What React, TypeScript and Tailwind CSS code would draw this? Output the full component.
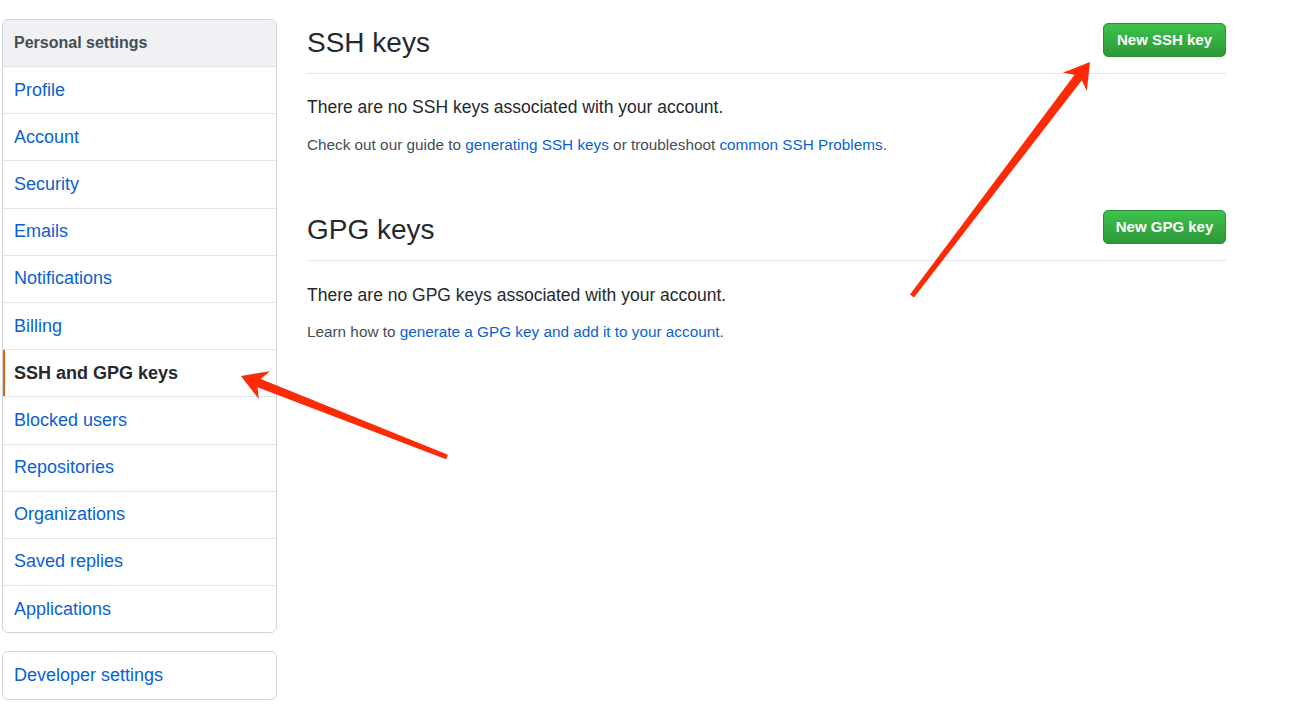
import React from "react";

const menuItems = [
  "Profile",
  "Account",
  "Security",
  "Emails",
  "Notifications",
  "Billing",
  "SSH and GPG keys",
  "Blocked users",
  "Repositories",
  "Organizations",
  "Saved replies",
  "Applications",
];

type Pt = [number, number];

// builds a tapered annotation arrow like the macOS markup tool draws
function arrowPoints(tail: Pt, tip: Pt, headLen = 25, headHalf = 15, tailHalf = 2.5, neckHalf = 4.5) {
  const dx = tip[0] - tail[0];
  const dy = tip[1] - tail[1];
  const len = Math.hypot(dx, dy);
  const ux = dx / len;
  const uy = dy / len;
  const nx = -uy;
  const ny = ux;
  const at = (along: number, side: number): string =>
    `${(tip[0] - ux * along + nx * side).toFixed(1)},${(tip[1] - uy * along + ny * side).toFixed(1)}`;
  const neck = headLen * 0.78;
  return [
    at(len, tailHalf),
    at(neck, neckHalf),
    at(headLen, headHalf),
    at(0, 0),
    at(headLen, -headHalf),
    at(neck, -neckHalf),
    at(len, -tailHalf),
  ].join(" ");
}

function GreenButton({ label }: { label: string }) {
  return (
    <button
      type="button"
      className="h-[34px] w-[123px] rounded-[5px] border border-[#2c8f37] bg-gradient-to-b from-[#3ec24c] to-[#2b9938] text-[15px] font-bold text-white"
    >
      {label}
    </button>
  );
}

function Section({
  title,
  button,
  lead,
  children,
  first,
}: {
  title: string;
  button: string;
  lead: string;
  children: React.ReactNode;
  first?: boolean;
}) {
  return (
    <section className={first ? "" : "mt-[54px]"}>
      <div className="flex items-start justify-between border-b border-[#e1e4e8] pb-[10px]">
        <h2 className="text-[28px] leading-[40px] font-normal text-[#24292e]">{title}</h2>
        <GreenButton label={button} />
      </div>
      <p className={`${first ? "mt-[21px]" : "mt-[22px]"} text-[17.5px] leading-[24px] text-[#24292e]`}>{lead}</p>
      <p className={`${first ? "mt-[15px]" : "mt-[14px]"} text-[15.3px] leading-[22px] text-[#444d56]`}>{children}</p>
    </section>
  );
}

export default function App() {
  return (
    <div className="relative h-[710px] w-[1294px] overflow-hidden bg-white font-['Liberation_Sans',Arial,sans-serif]">
      <div className="flex gap-[30px] pl-[2px] pt-[19px]">
        <aside className="w-[275px] shrink-0">
          <nav className="overflow-hidden rounded-[6px] border border-[#d1d5da]">
            <div className="flex h-[46px] items-center bg-[#f0f1f4] pl-[11px] text-[16px] font-bold text-[#444d56]">
              Personal settings
            </div>
            {menuItems.map((item) => {
              const active = item === "SSH and GPG keys";
              return (
                <div
                  key={item}
                  className={`relative flex h-[47.2px] items-center border-t border-[#e1e4e8] pl-[11px] text-[18px] ${
                    active ? "text-[17.5px] font-bold text-[#24292e]" : "text-[#0a5fd6]"
                  }`}
                >
                  {active && <span className="absolute bottom-0 left-0 top-0 w-[2px] bg-[#e36209]" />}
                  {item}
                </div>
              );
            })}
          </nav>
          <div className="mt-[18px] flex h-[49px] items-center rounded-[6px] border border-[#d1d5da] pl-[11px] text-[18px] text-[#0a5fd6]">
            Developer settings
          </div>
        </aside>

        <main className="w-[919px] pt-[4px]">
          <Section first title="SSH keys" button="New SSH key" lead="There are no SSH keys associated with your account.">
            Check out our guide to <span className="text-[#0a5fd6]">generating SSH keys</span> or troubleshoot{" "}
            <span className="text-[#0a5fd6]">common SSH Problems</span>.
          </Section>
          <Section title="GPG keys" button="New GPG key" lead="There are no GPG keys associated with your account.">
            Learn how to <span className="text-[#0a5fd6]">generate a GPG key and add it to your account</span>.
          </Section>
        </main>
      </div>

      <svg className="pointer-events-none absolute inset-0" width="1294" height="710" viewBox="0 0 1294 710">
        <polygon points={arrowPoints([912, 296], [1090, 62])} fill="#fc2a05" />
        <polygon points={arrowPoints([447, 457], [241, 376])} fill="#fc2a05" />
      </svg>
    </div>
  );
}
